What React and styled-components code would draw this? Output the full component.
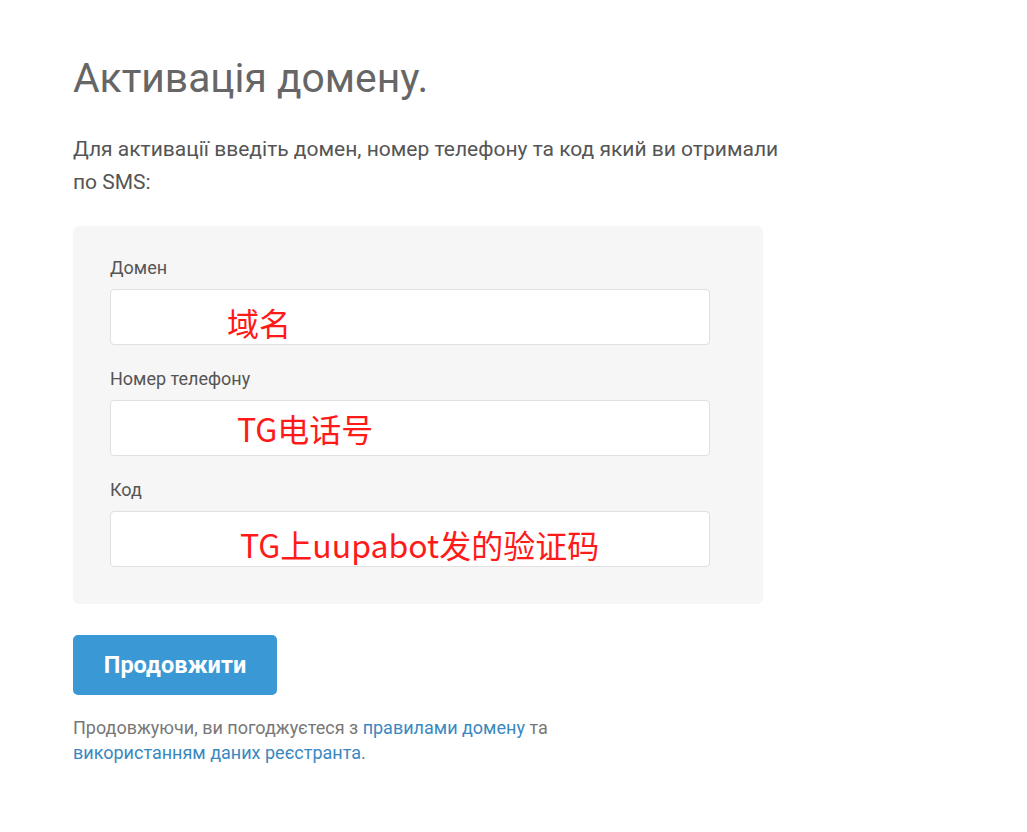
import React from "react";
import styled, { createGlobalStyle } from "styled-components";

const GlobalStyle = createGlobalStyle`
  html, body {
    margin: 0;
    padding: 0;
    background: #ffffff;
  }
  body {
    font-family: Roboto, "Noto Sans", sans-serif;
    color: #555555;
  }
`;

const Page = styled.div`
  padding: 52px 0 60px 73px;
  width: 720px;
`;

const Title = styled.h1`
  margin: 0;
  font-size: 40.8px;
  font-weight: 400;
  line-height: 52px;
  color: #666666;
`;

const Intro = styled.p`
  margin: 29px 0 0;
  width: 710px;
  font-size: 21px;
  line-height: 33px;
  color: #555555;
`;

const Panel = styled.form`
  margin-top: 27px;
  width: 690px;
  box-sizing: border-box;
  background: #f6f6f6;
  border-radius: 6px;
  padding: 30px 53px 37px 37px;
  display: flex;
  flex-direction: column;
  gap: 22px;
`;

const Field = styled.label`
  display: flex;
  flex-direction: column;
  gap: 9px;
`;

const FieldName = styled.span`
  font-size: 18px;
  line-height: 24px;
  color: #555555;
`;

const Input = styled.input`
  box-sizing: border-box;
  height: 56px;
  width: 100%;
  border: 1px solid #e0e0e0;
  border-radius: 4px;
  background: #ffffff;
  padding: ${(p) => p.shift}px 0 0 ${(p) => p.indent}px;
  font-family: "Microsoft YaHei", "Noto Sans CJK SC", sans-serif;
  font-size: 32px;
  color: #ff1a1a;
  outline: none;
`;

const Button = styled.button`
  margin-top: 31px;
  width: 204px;
  height: 60px;
  border: none;
  border-radius: 5px;
  background: #3a98d4;
  color: #ffffff;
  font-family: Roboto, sans-serif;
  font-weight: 700;
  font-size: 23.5px;
  cursor: pointer;
`;

const Terms = styled.p`
  margin: 20px 0 0;
  width: 500px;
  font-size: 18px;
  line-height: 25px;
  color: #777777;
`;

const Link = styled.a`
  color: #3a88c0;
  text-decoration: none;
`;

const fields = [
  { name: "Домен", value: "域名", indent: 116, shift: 10 },
  { name: "Номер телефону", value: "TG电话号", indent: 126, shift: 0 },
  { name: "Код", value: "TG上uupabot发的验证码", indent: 129, shift: 9 },
];

export default function App() {
  return (
    <>
      <GlobalStyle />
      <Page>
        <Title>Активація домену.</Title>
        <Intro>
          Для активації введіть домен, номер телефону та код який ви отримали
          по SMS:
        </Intro>
        <Panel onSubmit={(e) => e.preventDefault()}>
          {fields.map((f) => (
            <Field key={f.name}>
              <FieldName>{f.name}</FieldName>
              <Input defaultValue={f.value} indent={f.indent} shift={f.shift} />
            </Field>
          ))}
        </Panel>
        <Button>Продовжити</Button>
        <Terms>
          Продовжуючи, ви погоджуєтеся з <Link href="#">правилами домену</Link>{" "}
          та <Link href="#">використанням даних реєстранта</Link>.
        </Terms>
      </Page>
    </>
  );
}
